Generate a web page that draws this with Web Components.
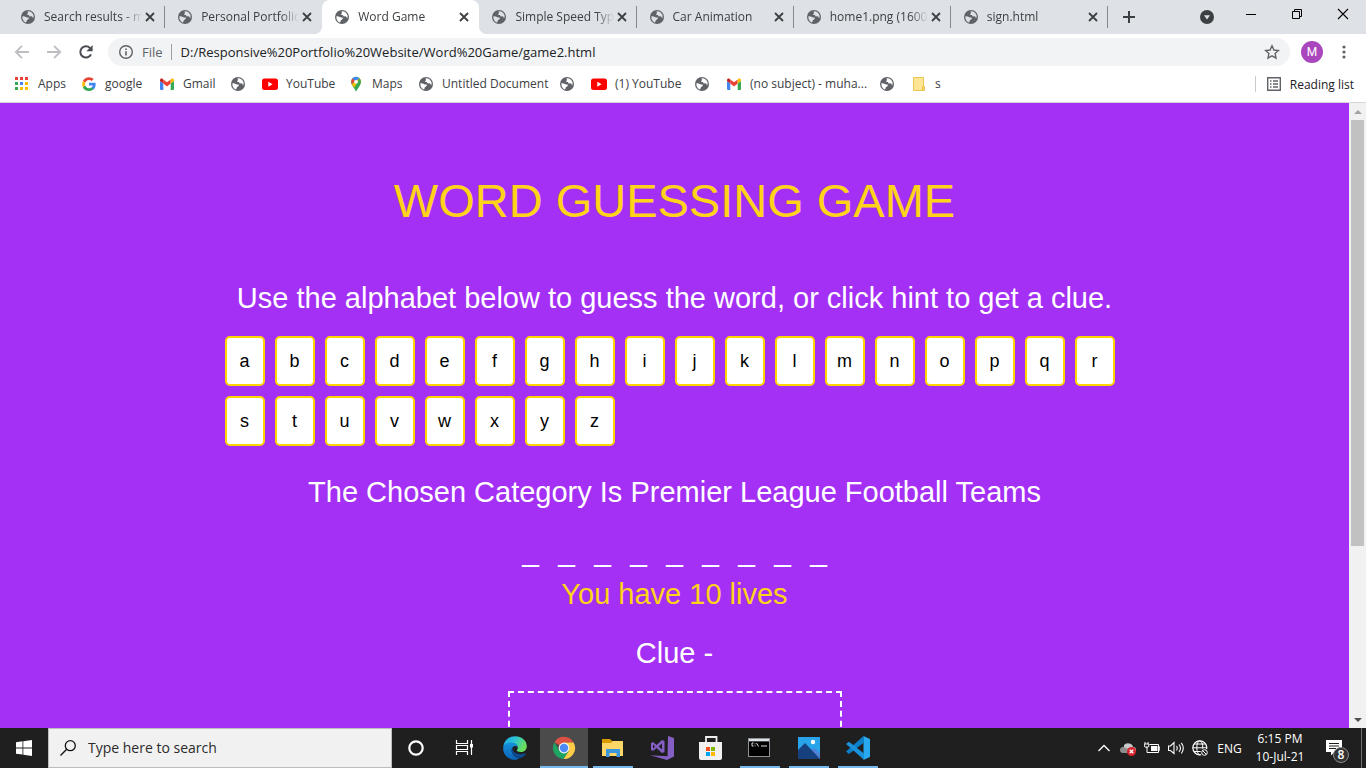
<!DOCTYPE html>
<html lang="en">
<head>
<meta charset="utf-8">
<title>Word Game</title>
<style>
  html, body { margin: 0; height: 100%; overflow: hidden; }
  body { font-family: "Open Sans", "Noto Sans", sans-serif; font-size: 12px; color: #3c4043; }
</style>
</head>
<body>
<desk-top>
  <browser-window>
    <tab-strip slot="tabs">
      <browser-tab label="Search results - m" icon="globe"></browser-tab>
      <browser-tab label="Personal Portfolio" icon="globe" before-active></browser-tab>
      <browser-tab label="Word Game" icon="globe" active></browser-tab>
      <browser-tab label="Simple Speed Typ" icon="globe"></browser-tab>
      <browser-tab label="Car Animation" icon="globe"></browser-tab>
      <browser-tab label="home1.png (1600" icon="globe"></browser-tab>
      <browser-tab label="sign.html" icon="globe"></browser-tab>
    </tab-strip>
    <address-bar slot="toolbar" url="D:/Responsive%20Portfolio%20Website/Word%20Game/game2.html"></address-bar>
    <bookmark-bar slot="bookmarks">
      <bookmark-link icon="apps" width="51">Apps</bookmark-link>
      <bookmark-link icon="google" width="62">google</bookmark-link>
      <bookmark-link icon="gmail" width="55">Gmail</bookmark-link>
      <bookmark-link icon="globe" bare></bookmark-link>
      <bookmark-link icon="youtube" width="70">YouTube</bookmark-link>
      <bookmark-link icon="maps" width="54">Maps</bookmark-link>
      <bookmark-link icon="globe" width="125">Untitled Document</bookmark-link>
      <bookmark-link icon="globe" bare></bookmark-link>
      <bookmark-link icon="youtube" width="87">(1) YouTube</bookmark-link>
      <bookmark-link icon="globe" bare></bookmark-link>
      <bookmark-link icon="gmail" width="137">(no subject) - muha...</bookmark-link>
      <bookmark-link icon="globe" bare></bookmark-link>
      <bookmark-link icon="folder">s</bookmark-link>
    </bookmark-bar>
    <word-game slot="page"></word-game>
  </browser-window>
  <task-bar slot="taskbar">
    <task-button icon="cortana" label="Cortana"></task-button>
    <task-button icon="taskview" label="Task View"></task-button>
    <task-button icon="edge" label="Edge" pinned></task-button>
    <task-button icon="chrome" label="Chrome" pinned running current></task-button>
    <task-button icon="files" label="File Explorer" pinned running></task-button>
    <task-button icon="vstudio" label="Visual Studio" pinned></task-button>
    <task-button icon="store" label="Store" pinned></task-button>
    <task-button icon="cmd" label="Command Prompt" pinned running></task-button>
    <task-button icon="photos" label="Photos" pinned running></task-button>
    <task-button icon="code" label="Code" pinned running></task-button>
    <system-tray slot="tray"></system-tray>
  </task-bar>
</desk-top>

<script>
const ICONS = {
  globe: ['0 0 16 16', `<circle cx="8" cy="8" r="7" fill="#5f6368"/><g fill="var(--hole,#fff)"><path d="M2.4 7.2c1.3.2 2.5.1 3.3.7.9.6 1.700.6 2.600.6.700.2.900 1-.1 1.700-.9.600-1.300.700-1.500 1.700-.2.700-.6 1.100-1.200 1.700C3.500 12.200 2 9.800 2.400 7.200z"/><path d="M7.500 2.400c2.900-.3 5 1.300 5.900 3.600.400 1.100.200 2.300-.2 3.300-.6-.5-.5-1.600-1.300-1.900-.9-.2-1.600.4-2.300-.1-.6-.5-.2-1.100-.900-1.300-.7-.1-1.400.1-1.600-.5-.2-.7.7-.9.900-1.500.1-.6-.4-1-.5-1.600z"/></g>`],
  close: ['0 0 16 16', `<path d="M4 4l8 8M12 4l-8 8" stroke="#3c4043" stroke-width="1.8"/>`],
  plus: ['0 0 16 16', `<path d="M8 2v12M2 8h12" stroke="#3c4043" stroke-width="2"/>`],
  caret: ['0 0 16 16', `<circle cx="8" cy="8" r="7" fill="#3c4043"/><path d="M5 6.200h6L8 10.500z" fill="#dee1e6"/>`],
  min: ['0 0 12 12', `<path d="M1 6.500h10" stroke="#000"/>`],
  restore: ['0 0 12 12', `<path d="M1.500 3.500h7v7h-7zM3.500 3.500v-2h7v7h-2" fill="none" stroke="#000"/>`],
  shut: ['0 0 12 12', `<path d="M1 1l10 10M11 1L1 11" stroke="#000" stroke-width="1.100"/>`],
  back: ['0 0 16 16', `<path d="M15 8H2M8 1.800L1.800 8 8 14.200" fill="none" stroke="#bcbec1" stroke-width="1.800"/>`],
  forward: ['0 0 16 16', `<path d="M1 8h13M8 1.800L14.200 8 8 14.200" fill="none" stroke="#bcbec1" stroke-width="1.800"/>`],
  reload: ['0 0 16 16', `<path d="M13 10.300A5.600 5.600 0 1 1 12 4.100" fill="none" stroke="#494c50" stroke-width="2"/><path d="M14.600 1v6.200H8.400z" fill="#494c50"/>`],
  info: ['0 0 16 16', `<circle cx="8" cy="8" r="6.300" fill="none" stroke="#5f6368" stroke-width="1.400"/><path d="M8 7.200v4.300M8 4.400v1.600" stroke="#5f6368" stroke-width="1.600"/>`],
  star: ['0 0 16 16', `<path d="M8 1.800l1.900 4.200 4.600.5-3.400 3.100.9 4.500L8 11.800l-4 2.300.9-4.500L1.500 6.500l4.600-.5z" fill="none" stroke="#5f6368" stroke-width="1.400"/>`],
  dots: ['0 0 16 16', `<g fill="#5f6368"><circle cx="8" cy="3" r="1.600"/><circle cx="8" cy="8" r="1.600"/><circle cx="8" cy="13" r="1.600"/></g>`],
  list: ['0 0 16 16', `<path d="M1.700 1.700h12.600v12.600H1.700z" fill="none" stroke="#5f6368" stroke-width="1.400"/><path d="M4 5h1.500M7 5h5M4 8h1.500M7 8h5M4 11h1.500M7 11h5" stroke="#5f6368" stroke-width="1.500"/>`],
  apps: ['0 0 16 16', `<path d="M1 1h3v3H1zM6 1h3v3H6zM11 1h3v3h-3z" fill="#ea4335"/><path d="M1 6h3v3H1z" fill="#34a853"/><path d="M6 6h3v3H6z" fill="#4285f4"/><path d="M11 6h3v3h-3z" fill="#fbbc04"/><path d="M1 11h3v3H1z" fill="#34a853"/><path d="M6 11h3v3H6zM11 11h3v3h-3z" fill="#fbbc04"/>`],
  google: ['0 0 48 48', `<path fill="#EA4335" d="M24 12c3.300 0 6 1.200 8 3l6-6C34.400 5.600 29.600 3.500 24 3.500 16 3.500 9 8.100 5.700 14.800l7 5.400C14.400 15.400 18.800 12 24 12z"/><path fill="#4285F4" d="M44 24.500c0-1.500-.1-2.900-.4-4.200H24v8.200h11.300c-.5 2.700-2 4.900-4.200 6.400l6.800 5.300c4-3.700 6.100-9.100 6.100-15.700z"/><path fill="#FBBC05" d="M12.700 28.800c-.4-1.400-.7-2.800-.7-4.300s.3-3 .7-4.300l-7-5.400C4.300 17.700 3.500 21 3.500 24.500s.8 6.800 2.200 9.700z"/><path fill="#34A853" d="M24 45c5.600 0 10.300-1.800 13.800-5l-6.800-5.300c-1.900 1.300-4.200 2-7 2-5.300 0-9.700-3.400-11.300-8l-7 5.500C9 40.900 16 45 24 45z"/>`],
  gmail: ['0 0 16 16', `<path fill="#4285f4" d="M1 5l3.300 2.500V14H2a1 1 0 0 1-1-1z"/><path fill="#34a853" d="M15 5l-3.300 2.500V14H14a1 1 0 0 0 1-1z"/><path fill="#ea4335" d="M4.300 3.500L8 6.300l3.700-2.800v4L8 10.500 4.300 7.500z"/><path fill="#c5221f" d="M1 4.300c0-1.700 1.700-2.200 2.700-1.300l.6.500v4L1 5z"/><path fill="#fbbc04" d="M15 4.300c0-1.700-1.700-2.200-2.700-1.300l-.6.500v4L15 5z"/>`],
  youtube: ['0 0 16 16', `<rect x="0" y="2.500" width="16" height="11.500" rx="2.500" fill="#f00"/><path d="M6.300 5.800v5l4.300-2.500z" fill="#fff"/>`],
  maps: ['0 0 16 16', `<path d="M8 15.500c-.7-3-4.800-5-4.800-9.700A4.800 4.800 0 0 1 8 .7a4.800 4.800 0 0 1 4.800 5.100C12.800 10.500 8.700 12.500 8 15.500z" fill="#34a853"/><path d="M8 .7A4.800 4.800 0 0 0 4.300 2.600L8 6l3.500-3.800A5 5 0 0 0 8 .7z" fill="#4285f4"/><path d="M4.300 2.600L7 5 3.700 8.300C2.900 6.300 3.100 4 4.300 2.600z" fill="#ea4335"/><path d="M3.700 8.300L11.500 2.200c1.500 2 1.700 4.200.7 6L6.300 11.700C5.200 10.400 4.200 9.400 3.700 8.300z" fill="#fbbc04"/><path d="M11.500 2.200c1.800 2 1.700 4.700.3 7L8 15.500c-.2-1.300-.9-2.500-1.700-3.800z" fill="#34a853"/><circle cx="8" cy="5.800" r="1.900" fill="#fff"/>`],
  folder: ['0 0 16 16', `<path d="M2.500 1.500h10v9h1v4h-11z" fill="#ffe694" stroke="#ecc44f"/><path d="M11.500 14v-3.500h1.500V14z" fill="#ffe694" stroke="#ecc44f"/>`],
  up: ['0 0 12 12', `<path d="M2 8h8L6 4z" fill="#a3a3a3"/>`],
  down: ['0 0 12 12', `<path d="M2 4h8L6 8z" fill="#505050"/>`],
  win: ['0 0 16 16', `<path d="M0 2.200L6.500 1.300v6.200H0zM7.300 1.200L16 0v7.500H7.300zM0 8.400h6.500v6.200L0 13.800zM7.300 8.400H16V16l-8.700-1.200z" fill="#fff"/>`],
  search: ['0 0 16 16', `<circle cx="10.300" cy="5.700" r="5" fill="none" stroke="#111" stroke-width="1.300"/><path d="M6.700 9.300L.5 15.500" stroke="#111" stroke-width="1.300"/>`],
  cortana: ['0 0 24 24', `<circle cx="12" cy="12" r="6.700" fill="none" stroke="#fff" stroke-width="2.200"/>`],
  taskview: ['0 0 24 24', `<path d="M4.500 4v3.500h11V4M4.500 19v-3.500h11V19M4.500 9.500h11v4h-11zM19.500 4v15" fill="none" stroke="#fff" stroke-width="1.200"/><path d="M18 8h3v3.500h-3z" fill="#fff"/>`],
  edge: ['0 0 24 24', `<defs><linearGradient id="a" x1="0" y1="0" x2="1" y2=".4"><stop offset="0" stop-color="#1ca9e6"/><stop offset=".5" stop-color="#2cc3d5"/><stop offset="1" stop-color="#69e05a"/></linearGradient><linearGradient id="b" x1="0" y1="0" x2="0" y2="1"><stop offset="0" stop-color="#1593dc"/><stop offset="1" stop-color="#0c62b5"/></linearGradient></defs><path d="M.3 11C1 4.500 6 .2 12 .2c7 0 11.800 4.600 11.800 9.800 0 4-2.900 6-6 6-2.500 0-4-.8-4-1.500 0-.6 1-1 1-2.800C14.800 9 12 7 8.500 7 4.800 7 1.500 8.500.3 11z" fill="url(#a)"/><path d="M.2 12.500C.2 8.500 4 6.500 8 6.500c3.700 0 6.500 2 6.700 4.800-1-1.300-2.700-1.600-4-.8-2 1.100-2.600 3.800-1.500 6.500 1.300 3.200 4.200 5 7.300 5-1.300 1.200-3 1.800-5 1.800C5 23.800.2 18.500.2 12.500z" fill="url(#b)"/><path d="M10.700 10.500c-2 1.100-2.700 3.800-1.500 6.500 1.800 4.300 7 6 10.600 4 1.300-.8 2.300-1.900 3-3 .4-.7-.2-1.100-.9-.7-1.300.7-2.700 1-4.100 1-4.500 0-7.900-2.300-8.200-5.200-.1-1.100.4-2 1.100-2.600z" fill="#0d4a94"/>`],
  chrome: ['0 0 24 24', `<path d="M12 12L2.500 6.300A11 11 0 0 1 21.600 6.500H12z" fill="#dd5144"/><path d="M12 12l9.600-5.500A11 11 0 0 1 11.500 23l5.200-8.300z" fill="#ffcd46"/><path d="M12 12l4.700 2.700L11.500 23A11 11 0 0 1 2.500 6.300l4.800 8.400z" fill="#1ea362"/><path d="M12 6.500h9.600l-5 5.500z" fill="#ffcd46"/><circle cx="12" cy="12" r="5.400" fill="#f1f1f1"/><circle cx="12" cy="12" r="4.200" fill="#4c8bf5"/>`],
  files: ['0 0 24 24', `<path d="M1 3h8l2 2h11v4H1z" fill="#d99a00"/><path d="M1 7h9l2-2h10v15H1z" fill="#ffd767"/><path d="M5 13h14v8h-3.500v-4h-7v4H5z" fill="#3a96dd"/>`],
  vstudio: ['0 0 24 24', `<path d="M18 0l6 2v18.500L17 24 0 19.200l17.500 1z" fill="#865fc5"/><path d="M1 7l2-1 3.600 3L12 4l2.500 1v11L12 17l-5.400-5L3 15l-2-1zM3 8.500v4l2-2zM12 7.500l-3.500 3 3.500 3z" fill="#865fc5" fill-rule="evenodd"/>`],
  store: ['0 0 24 24', `<path d="M7 7V1h10.500V7" fill="none" stroke="#eee" stroke-width="1.800"/><path d="M0 6h23v16q0 2-2 2H2q-2 0-2-2z" fill="#f1f1f1"/><path d="M7 11h4v4H7z" fill="#f25022"/><path d="M12 11h4v4h-4z" fill="#7fba00"/><path d="M7 16h4v4H7z" fill="#00a4ef"/><path d="M12 16h4v4h-4z" fill="#ffb900"/>`],
  cmd: ['0 0 24 24', `<path d="M0 2h22v19H0z" fill="#8d9398"/><path d="M1 3h20v2H1z" fill="#dfe3e6"/><path d="M1 5.500h20V20H1z" fill="#000"/><path d="M5.500 7H4v3h1.500M7 7.500v.8M7 9.500v.8M8.500 7l2 3.500M13 10h6" fill="none" stroke="#ddd"/>`],
  photos: ['0 0 24 24', `<path d="M1 1h22v22H1z" fill="#29a3ea"/><path d="M12 16l5-4 6 5.500V23H12z" fill="#4f82d6"/><path d="M1 14l7-7 15 16H1z" fill="#17417e"/><circle cx="16" cy="6" r="2.200" fill="#fff"/>`],
  code: ['0 0 24 24', `<path d="M17.500 0L24 3v18l-6.500 3z" fill="#29a9f0"/><path d="M18 .2v6.300L3 18l-3-2.400L17 .5z" fill="#0d7fc9"/><path d="M0 8l3-2.200 15 11.700v6.300L0 8z" fill="#1b93dc"/>`],
  chevron: ['0 0 16 16', `<path d="M2.500 11L8 5.500l5.500 5.500" fill="none" stroke="#fff" stroke-width="1.300"/>`],
  cloud: ['0 0 16 16', `<path d="M4 5a5 4 0 0 1 9 2 3 3 0 0 1 0 6H4a4 4 0 0 1 0-6z" fill="#c9c9c9"/><path d="M0 10a3 3 0 0 1 4-3l6 3-1 3H3a3 3 0 0 1-3-3z" fill="#8e8e8e"/><circle cx="11.500" cy="11.500" r="4.500" fill="#d9202a"/><path d="M9.700 9.700l3.600 3.600M13.300 9.700l-3.600 3.600" stroke="#fff" stroke-width="1.300"/>`],
  battery: ['0 0 16 16', `<path d="M5.500 4.500h9v8h-9M5 12.500h2" fill="none" stroke="#fff"/><path d="M7 6h6.500v5H7z" fill="#fff"/><path d="M15 7h1v3h-1zM1 2v2M4 2v2" stroke="#fff"/><path d="M.3 4h4.500v2.500q-2.200 2-4.500 0zM2 7h1v5.500h3" fill="none" stroke="#fff"/>`],
  speaker: ['0 0 16 16', `<path d="M.5 6v4.500h2l3.500 3v-11L2.500 6zM8.500 6q1.500 2 0 4.500M11 4.500q3 3.700 0 7.500M13.300 2.800q4 5.200 0 10.700" fill="none" stroke="#fff" stroke-width="1.100"/>`],
  network: ['0 0 16 16', `<circle cx="7.800" cy="7.800" r="7" fill="none" stroke="#fff" stroke-width="1.200"/><ellipse cx="7.800" cy="7.800" rx="3" ry="7" fill="none" stroke="#fff"/><path d="M.8 7.800h14M2 4h11.600M2 11.500h11.600" stroke="#fff"/><circle cx="12.500" cy="12.500" r="4" fill="#1f1f1f"/><circle cx="12.500" cy="12.500" r="2.800" fill="#1f1f1f" stroke="#fff"/><path d="M10.700 10.700l3.600 3.600" stroke="#fff"/>`],
  notes: ['0 0 16 16', `<path d="M0 0h16v12H8.500L5 15.500V12H0z" fill="#fff"/><path d="M3 3.500h10M3 6h10M3 8.500h7" stroke="#1f1f1f"/>`]
};

class Base extends HTMLElement {
  connectedCallback() {
    if (this.shadowRoot) return;
    this.attachShadow({ mode: 'open' }).innerHTML = `<style>
      :host, *, *::before { box-sizing: border-box; }
      button { font: inherit; color: inherit; background: none; border: 0; padding: 0; margin: 0; }
      input { font: inherit; color: inherit; background: none; border: 0; padding: 0; margin: 0; outline: 0; }
      a { color: inherit; text-decoration: none; }
      ${this.css()}</style>${this.html()}`;
  }
  css() { return ''; }
  html() { return '<slot></slot>'; }
}
const at = (el, name) => el.getAttribute(name) || '';
const define = (name, css, html) => customElements.define(name, class extends Base {
  css() { return css; }
  html() { return html(this); }
});
const icon = (name, size = 16) => `<ui-icon name="${name}" size="${size}"></ui-icon>`;

customElements.define('ui-icon', class extends Base {
  css() { const s = at(this, 'size') || 16; return `:host { display: block; flex: none; width: ${s}px; height: ${s}px; } svg { display: block; width: 100%; height: 100%; }`; }
  html() { const [box, body] = ICONS[at(this, 'name')]; return `<svg viewBox="${box}" aria-hidden="true">${body}</svg>`; }
});

define('desk-top', `:host { display: flex; flex-direction: column; height: 100vh; }
  ::slotted(browser-window) { flex: 1; min-height: 0; }`,
  () => `<slot></slot><slot name="taskbar"></slot>`);

define('browser-window', `:host { display: flex; flex-direction: column; background: #fff; }
  .view { flex: 1; min-height: 0; display: flex; border-top: 1px solid #d5d7db; }
  ::slotted(word-game) { flex: 1; min-width: 0; }`,
  () => `<slot name="tabs"></slot><slot name="toolbar"></slot><slot name="bookmarks"></slot>
  <div class="view"><slot name="page"></slot><page-scroll></page-scroll></div>`);

define('tab-strip', `:host { display: flex; align-items: center; height: 34px; padding-left: 8px; background: #dee1e6; --hole: #dee1e6; }
  .tabs { display: flex; flex: 0 1 1100px; min-width: 0; height: 34px; }
  .new { margin-left: 13px; }
  .spacer { flex: 1; }
  .drop { margin-right: 13px; }
  .win { display: grid; place-items: center; width: 46px; height: 28px; align-self: flex-start; }
  `,
  () => `<div class="tabs"><slot></slot></div>
  <button class="new" aria-label="New tab">${icon('plus')}</button><span class="spacer"></span>
  <button class="drop" aria-label="Search tabs">${icon('caret')}</button>
  <button class="win" aria-label="Minimize">${icon('min', 12)}</button>
  <button class="win" aria-label="Restore">${icon('restore', 12)}</button>
  <button class="win" aria-label="Close">${icon('shut', 12)}</button>`);

define('browser-tab', `:host { display: flex; align-items: center; flex: 1 1 0; min-width: 0; height: 34px; padding: 0 6px 0 12px; position: relative; border-right: 1px solid transparent; }
  :host(:not([active]):not([before-active])) { border-image: linear-gradient(transparent 7px, #85888d 7px, #85888d 27px, transparent 27px) 1; border-left: 0; border-top: 0; border-bottom: 0; }
  :host([active]) { background: #fff; border-radius: 8px 8px 0 0; --hole: #fff; }
  :host([active])::before { content: ""; position: absolute; left: -8px; right: -9px; bottom: 0; height: 8px;
    background: radial-gradient(circle at 0 0, transparent 8px, #fff 8px) left / 8px 8px no-repeat, radial-gradient(circle at 100% 0, transparent 8px, #fff 8px) right / 8px 8px no-repeat; }
  .pick { display: flex; align-items: center; gap: 8px; flex: 1; min-width: 0; text-align: left; }
  .text { flex: 1; min-width: 0; white-space: nowrap; line-height: 20px; -webkit-mask-image: linear-gradient(90deg, #000 calc(100% - 18px), transparent); }`,
  el => `<button class="pick">${icon(at(el, 'icon'))}<span class="text">${at(el, 'label')}</span></button>
  <button class="x" aria-label="Close tab">${icon('close')}</button>`);

define('address-bar', `:host { display: flex; align-items: center; height: 36px; padding: 0 14px; font-size: 14px; }
  .nav { margin-right: 16px; }
  .reload { margin-right: 14px; }
  .box { display: flex; align-items: center; flex: 1; height: 28px; margin-right: 11px; padding: 0 10px; border-radius: 14px; background: #f1f3f4; color: #5f6368; line-height: 20px; font-size: 13px; }
  .box label { margin: 0 8px; }
  .bar { width: 1px; height: 16px; background: #9aa0a6; margin-right: 9px; }
  input { flex: 1; min-width: 0; color: #202124; }
  .me { width: 22px; height: 22px; border-radius: 50%; background: #ab47bc; color: #fff; font: 12px Roboto, sans-serif; margin-right: 13px; }`,
  el => `<button class="nav" aria-label="Back">${icon('back')}</button>
  <button class="nav" aria-label="Forward">${icon('forward')}</button>
  <button class="nav reload" aria-label="Reload">${icon('reload')}</button>
  <div class="box">${icon('info')}<label for="u">File</label><span class="bar"></span>
  <input id="u" value="${at(el, 'url')}"><button aria-label="Bookmark">${icon('star')}</button></div>
  <button class="me">M</button><button class="menu" aria-label="Menu">${icon('dots')}</button>`);

define('bookmark-bar', `:host { display: flex; align-items: center; height: 32px; padding: 0 12px 4px 14px; }
  nav { display: flex; align-items: center; gap: 16px; flex: 1; min-width: 0; }
  .read { display: flex; align-items: center; gap: 8px; height: 16px; padding-left: 10px; border-left: 1px solid #c8cace; color: #202124; white-space: nowrap; }`,
  () => `<nav><slot></slot></nav><button class="read">${icon('list')}<span>Reading list</span></button>`);

customElements.define('bookmark-link', class extends Base {
  css() {
    const w = at(this, 'width');
    return `:host { display: block; flex: none; width: ${w ? w + 'px' : 'auto'}; }
    a { display: flex; align-items: center; gap: 8px; line-height: 20px; white-space: nowrap; }`;
  }
  html() {
    const bare = this.hasAttribute('bare');
    return `<a href="#" ${bare ? 'aria-label="Bookmark"' : ''}>${icon(at(this, 'icon'))}${bare ? '' : '<span><slot></slot></span>'}</a>`;
  }
});

define('page-scroll', `:host { display: flex; flex-direction: column; align-items: center; width: 17px; background: #f1f1f1; }
  .cap { display: grid; place-items: center; height: 17px; flex: none; }
  .track { flex: 1; width: 13px; }
  .thumb { height: 72%; background: #c1c1c1; }`,
  () => `<div class="cap">${icon('up', 12)}</div><div class="track"><div class="thumb"></div></div><div class="cap">${icon('down', 12)}</div>`);

define('word-game', `:host { display: block; overflow: hidden; padding-top: 71px; background: #a530f5; color: #fff; font: 29px/34px "Liberation Sans", Arial, sans-serif; text-align: center; }
  h1, h2, p { margin: 0; font: inherit; }
  h1 { color: #ffd319; font-size: 47px; line-height: 54px; margin-bottom: 53px; }
  .keys { margin: 16px auto 24px; }
  .blanks { display: flex; justify-content: center; list-style: none; margin: 25px 0 9px; padding: 0; font-size: 30px; }
  .blanks li { width: 36px; }
  .lives { color: #ffd319; margin-bottom: 25px; }
  .stage { width: 334px; height: 184px; margin: 21px auto 0; border: 2px dashed #fff; }`,
  () => `<h1>WORD GUESSING GAME</h1>
  <h2>Use the alphabet below to guess the word, or click hint to get a clue.</h2>
  <letter-keys class="keys"></letter-keys>
  <h2>The Chosen Category Is Premier League Football Teams</h2>
  <ul class="blanks">${'<li>_</li>'.repeat(9)}</ul>
  <p class="lives">You have 10 lives</p>
  <p>Clue -</p>
  <div class="stage"></div>`);

define('letter-keys', `:host { display: flex; flex-wrap: wrap; max-width: 910px; }
  button { width: 40px; height: 50px; margin: 5px; border: 2px solid #ffd500; border-radius: 5px; background: #fff; color: #000; font-size: 18px; line-height: 20px; }`,
  () => [...'abcdefghijklmnopqrstuvwxyz'].map(c => `<button>${c}</button>`).join(''));

define('task-bar', `:host { display: flex; height: 40px; background: #1f1f1f; color: #fff; }
  .start { display: grid; place-items: center; width: 48px; }
  .find { display: flex; align-items: center; gap: 12px; width: 344px; padding-left: 11px; border: 1px solid #bdbdbd; background: #f1f1f1; color: #2b2b2b; font-size: 14px; line-height: 20px; }
  input { flex: 1; min-width: 0; } input::placeholder { color: #2b2b2b; opacity: 1; }
  .apps { display: flex; flex: 1; min-width: 0; }`,
  () => `<button class="start" aria-label="Start">${icon('win')}</button>
  <label class="find">${icon('search')}<input placeholder="Type here to search"></label>
  <div class="apps"><slot></slot></div><slot name="tray"></slot>`);

define('task-button', `:host { display: block; width: 48px; height: 40px; }
  :host([pinned]) { margin-right: 1px; }
  :host([label="Edge"]) { margin-left: 3px; }
  button { display: grid; place-items: center; width: 48px; height: 40px; }
  :host([running]) button { background: linear-gradient(#76b9ed, #76b9ed) bottom / 40px 2px no-repeat; }
  :host([current]) button { background: linear-gradient(#76b9ed, #76b9ed) bottom / 48px 2px no-repeat #4b4b4b; }`,
  el => `<button aria-label="${at(el, 'label')}">${icon(at(el, 'icon'), 24)}</button>`);

define('system-tray', `:host { display: flex; align-items: center; }
  .i { display: grid; place-items: center; width: 24px; height: 40px; }
  .lang { width: 35px; }
  .clock { width: 66px; line-height: 18px; text-align: center; }
  .note { display: grid; place-items: center; position: relative; width: 42px; height: 40px; }
  .badge { position: absolute; left: 20px; top: 19px; width: 16px; height: 16px; border: 1px solid #8a8a8a; border-radius: 50%; background: #333; line-height: 14px; font-weight: 600; text-align: center; }
  .peek { width: 5px; height: 40px; border-left: 1px solid #6d6d6d; margin-left: 6px; }`,
  () => ['chevron', 'cloud', 'battery', 'speaker', 'network'].map(n => `<button class="i" aria-label="${n}">${icon(n)}</button>`).join('') +
  `<button class="lang">ENG</button><button class="clock"><div>6:15 PM</div><div>10-Jul-21</div></button>
  <button class="note" aria-label="Notifications">${icon('notes')}<span class="badge">8</span></button><button class="peek" aria-label="Show desktop"></button>`);
</script>
</body>
</html>
